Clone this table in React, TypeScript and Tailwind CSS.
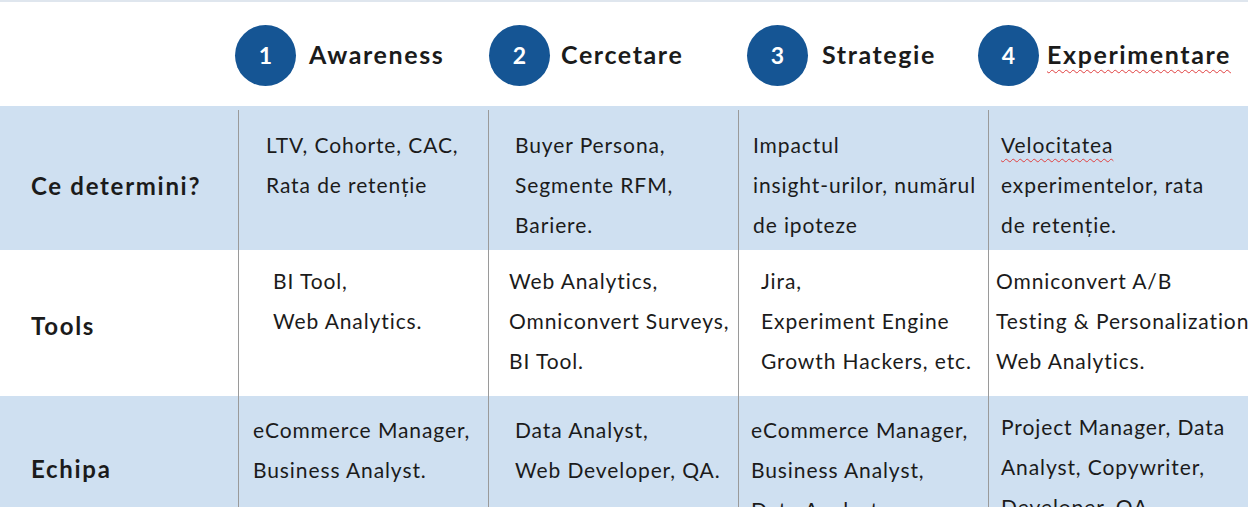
import React from "react";

const cols = "grid grid-cols-[238px_250px_250px_250px_260px]";

type Cell = { lines: string[]; pl: string; pt: string; wavy?: number[] };

const rows: { label: string; bg: string; h: string; labelPt: string; cells: Cell[] }[] = [
  {
    label: "Ce determini?",
    bg: "bg-[#cfe0f1]",
    h: "h-[144px]",
    labelPt: "pt-[66px]",
    cells: [
      { lines: ["LTV, Cohorte, CAC,", "Rata de retenție"], pl: "pl-[27px]", pt: "pt-[15px]" },
      { lines: ["Buyer Persona,", "Segmente RFM,", "Bariere."], pl: "pl-[26px]", pt: "pt-[15px]" },
      { lines: ["Impactul", "insight-urilor, numărul", "de ipoteze"], pl: "pl-[14px]", pt: "pt-[15px]" },
      { lines: ["Velocitatea", "experimentelor, rata", "de retenție."], pl: "pl-[12px]", pt: "pt-[15px]", wavy: [0] },
    ],
  },
  {
    label: "Tools",
    bg: "bg-white",
    h: "h-[146px]",
    labelPt: "pt-[62px]",
    cells: [
      { lines: ["BI Tool,", "Web Analytics."], pl: "pl-[34px]", pt: "pt-[11px]" },
      { lines: ["Web Analytics,", "Omniconvert Surveys,", "BI Tool."], pl: "pl-[20px]", pt: "pt-[11px]" },
      { lines: ["Jira,", "Experiment Engine", "Growth Hackers, etc."], pl: "pl-[22px]", pt: "pt-[11px]" },
      { lines: ["Omniconvert A/B", "Testing & Personalization", "Web Analytics."], pl: "pl-[7px]", pt: "pt-[11px]" },
    ],
  },
  {
    label: "Echipa",
    bg: "bg-[#cfe0f1]",
    h: "h-[120px]",
    labelPt: "pt-[59px]",
    cells: [
      { lines: ["eCommerce Manager,", "Business Analyst."], pl: "pl-[14px]", pt: "pt-[14px]" },
      { lines: ["Data Analyst,", "Web Developer, QA."], pl: "pl-[26px]", pt: "pt-[14px]" },
      { lines: ["eCommerce Manager,", "Business Analyst,", "Data Analyst"], pl: "pl-[12px]", pt: "pt-[14px]" },
      { lines: ["Project Manager, Data", "Analyst, Copywriter,", "Developer, QA."], pl: "pl-[12px]", pt: "pt-[11px]" },
    ],
  },
];

const headers = [
  { n: "1", t: "Awareness", ml: "ml-[-3px]", gap: "gap-[13px]" },
  { n: "2", t: "Cercetare", ml: "ml-[1px]", gap: "gap-[11px]" },
  { n: "3", t: "Strategie", ml: "ml-[9px]", gap: "gap-[14px]" },
  { n: "4", t: "Experimentare", ml: "ml-[-10px]", gap: "gap-[8px]", wavy: true },
];

export default function App() {
  return (
    <div className="w-[1248px] h-[507px] overflow-hidden bg-white text-[#1b1b1b] font-['Lato','Liberation_Sans',sans-serif]">
      <div className="h-[2px] bg-[#dfe6ee]" />
      <div className={`${cols} h-[104px] bg-white`}>
        <div />
        {headers.map((h) => (
          <div key={h.n} className={`flex items-center ${h.gap} ${h.ml} pt-[2px]`}>
            <div className="w-[61px] h-[61px] shrink-0 rounded-full bg-[#155594] flex items-center justify-center text-white text-[23px] font-bold">
              {h.n}
            </div>
            <span
              className={`text-[25px] font-bold tracking-[1.6px] whitespace-nowrap ${
                h.wavy ? "underline decoration-wavy decoration-[#e04040] decoration-1 underline-offset-[5px]" : ""
              }`}
            >
              {h.t}
            </span>
          </div>
        ))}
      </div>
      {rows.map((r, ri) => (
        <div key={r.label} className={`${cols} ${r.bg} ${r.h}`}>
          <div className={`pl-[31px] ${r.labelPt} text-[24px] font-bold leading-[28px] tracking-[1.7px] whitespace-nowrap`}>
            {r.label}
          </div>
          {r.cells.map((c, ci) => (
            <div key={ci} className={`${ri === 0 ? "pt-[4px]" : ""} h-full`}>
              <div
                className={`h-full border-l border-[#9a9a9a] ${c.pl} ${c.pt} text-[21px] tracking-[0.9px] leading-[40px] whitespace-nowrap`}
              >
                {c.lines.map((l, li) => (
                  <div key={li}>
                    <span
                      className={
                        c.wavy && c.wavy.includes(li)
                          ? "underline decoration-wavy decoration-[#e04040] decoration-1 underline-offset-[5px]"
                          : ""
                      }
                    >
                      {l}
                    </span>
                  </div>
                ))}
              </div>
            </div>
          ))}
        </div>
      ))}
    </div>
  );
}
